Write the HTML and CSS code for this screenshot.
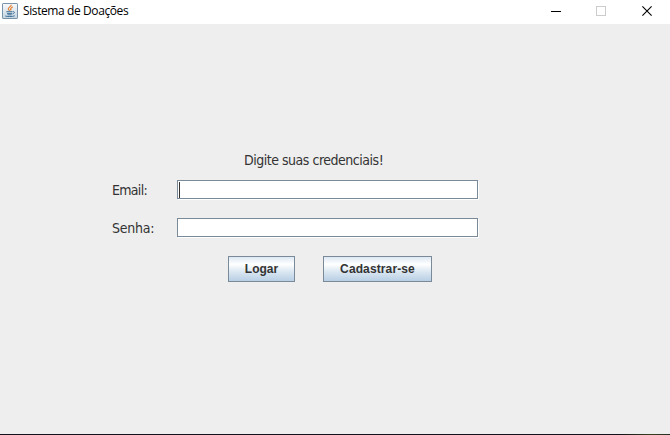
FILE: index.html
```html
<!DOCTYPE html>
<html lang="pt-BR">
<head>
<meta charset="utf-8">
<title>Sistema de Doações</title>
<link rel="stylesheet" href="styles.css">
</head>
<body>
<header class="titlebar">
  <svg class="app-icon" width="16" height="16" viewBox="0 0 16 16">
    <defs><linearGradient id="tile" x1="0" y1="0" x2="0" y2="1"><stop offset="0" stop-color="#f8fafc"/><stop offset="1" stop-color="#c5d4e0"/></linearGradient></defs>
    <rect x=".5" y=".5" width="15" height="15" rx=".6" fill="url(#tile)" stroke="#7893aa"/>
    <path d="M9.3 1.8C9.5 3.5 5.8 4.4 6.3 6.2L7.6 7.8M10.8 3.8C8.2 5 8.2 6 8.9 7.6" fill="none" stroke="#e48236" stroke-width="1.2"/>
    <path d="M4.3 8.7H10.5M5 10.4H10M5.5 11.8H9.7M10.8 8.7C13.2 8.4 12.8 10.5 10.5 10.9M3.3 13C5 13.8 10.5 13.8 12.7 12.8" fill="none" stroke="#42739b"/>
  </svg>
  <span class="caption">Sistema de Doações</span>
  <div class="controls">
    <svg width="46" height="24" viewBox="0 0 46 24"><path d="M19 11.5H29" stroke="#000"/></svg>
    <svg width="46" height="24" viewBox="0 0 46 24"><rect x="18.5" y="6.5" width="9" height="9" fill="none" stroke="#ccc"/></svg>
    <svg width="46" height="24" viewBox="0 0 46 24"><path d="M18.4 6.4L27.6 15.6M27.6 6.4L18.4 15.6" stroke="#000" stroke-width="1.1"/></svg>
  </div>
</header>
<main class="content">
  <form class="login">
    <p class="prompt">Digite suas credenciais!</p>
    <label class="label email" for="email">Email:</label>
    <div class="field"><input id="email" type="text"><i class="caret"></i></div>
    <label class="label senha" for="senha">Senha:</label>
    <div class="field"><input id="senha" type="password"></div>
    <div class="actions">
      <button class="button logar" type="button"><span>Logar</span></button>
      <button class="button cadastrar" type="button"><span>Cadastrar-se</span></button>
    </div>
  </form>
</main>
<footer class="edge"></footer>
</body>
</html>
```
FILE: styles.css
```css
* { box-sizing: border-box; }

body {
  display: flex;
  flex-direction: column;
  height: 435px;
  margin: 0;
  overflow: hidden;
  background: #eee;
  color: #333;
}

.titlebar {
  display: flex;
  align-items: flex-start;
  height: 24px;
  background: #fff;
}

.app-icon { margin: 3px 5px 0 2px; }

.caption {
  color: #000;
  font: 12px/22px "Open Sans", sans-serif;
  letter-spacing: -0.4px;
  white-space: nowrap;
}

.controls { display: flex; margin-left: auto; }

.controls svg { display: block; }

.content { flex: 1; padding: 126px 0 0 112px; }

.login {
  display: grid;
  grid-template-columns: 65px 301px;
  grid-template-rows: 30px 38px 38px 26px;
}

.prompt {
  grid-column: 1 / 3;
  margin: 0 0 0 132px;
}

.prompt, .label {
  font: 14px/20px "DejaVu Sans Condensed", "DejaVu Sans", sans-serif;
  font-stretch: condensed;
  white-space: nowrap;
}

.prompt { letter-spacing: -0.48px; }
.email { letter-spacing: -0.7px; }
.senha { letter-spacing: -0.25px; }

.field {
  position: relative;
  height: 19px;
  box-shadow: 1px 1px 0 #fff;
}

.field input {
  display: block;
  width: 100%;
  height: 19px;
  padding: 0 3px;
  border: 1px solid #7a8a99;
  border-radius: 0;
  background: #fff;
  outline: 0;
}

.caret {
  position: absolute;
  top: 2px;
  left: 2px;
  width: 1px;
  height: 16px;
  background: #333;
}

.actions {
  display: flex;
  grid-column: 1 / 3;
  gap: 28px;
  padding-left: 116px;
}

.button {
  height: 26px;
  padding: 0;
  border: 1px solid #7a8a99;
  border-radius: 0;
  background: linear-gradient(#dde8f3 0%, #fff 30%, #dce8f2 60%, #b8cfe5 100%);
  color: #333;
  font: bold 12px/24px "Liberation Sans", Arial, sans-serif;
}

.logar { width: 67px; }
.cadastrar { width: 109px; letter-spacing: 0.12px; }

.edge { height: 1px; background: linear-gradient(90deg, #15101a 0 620px, #354020 650px, #282c20); }
```
